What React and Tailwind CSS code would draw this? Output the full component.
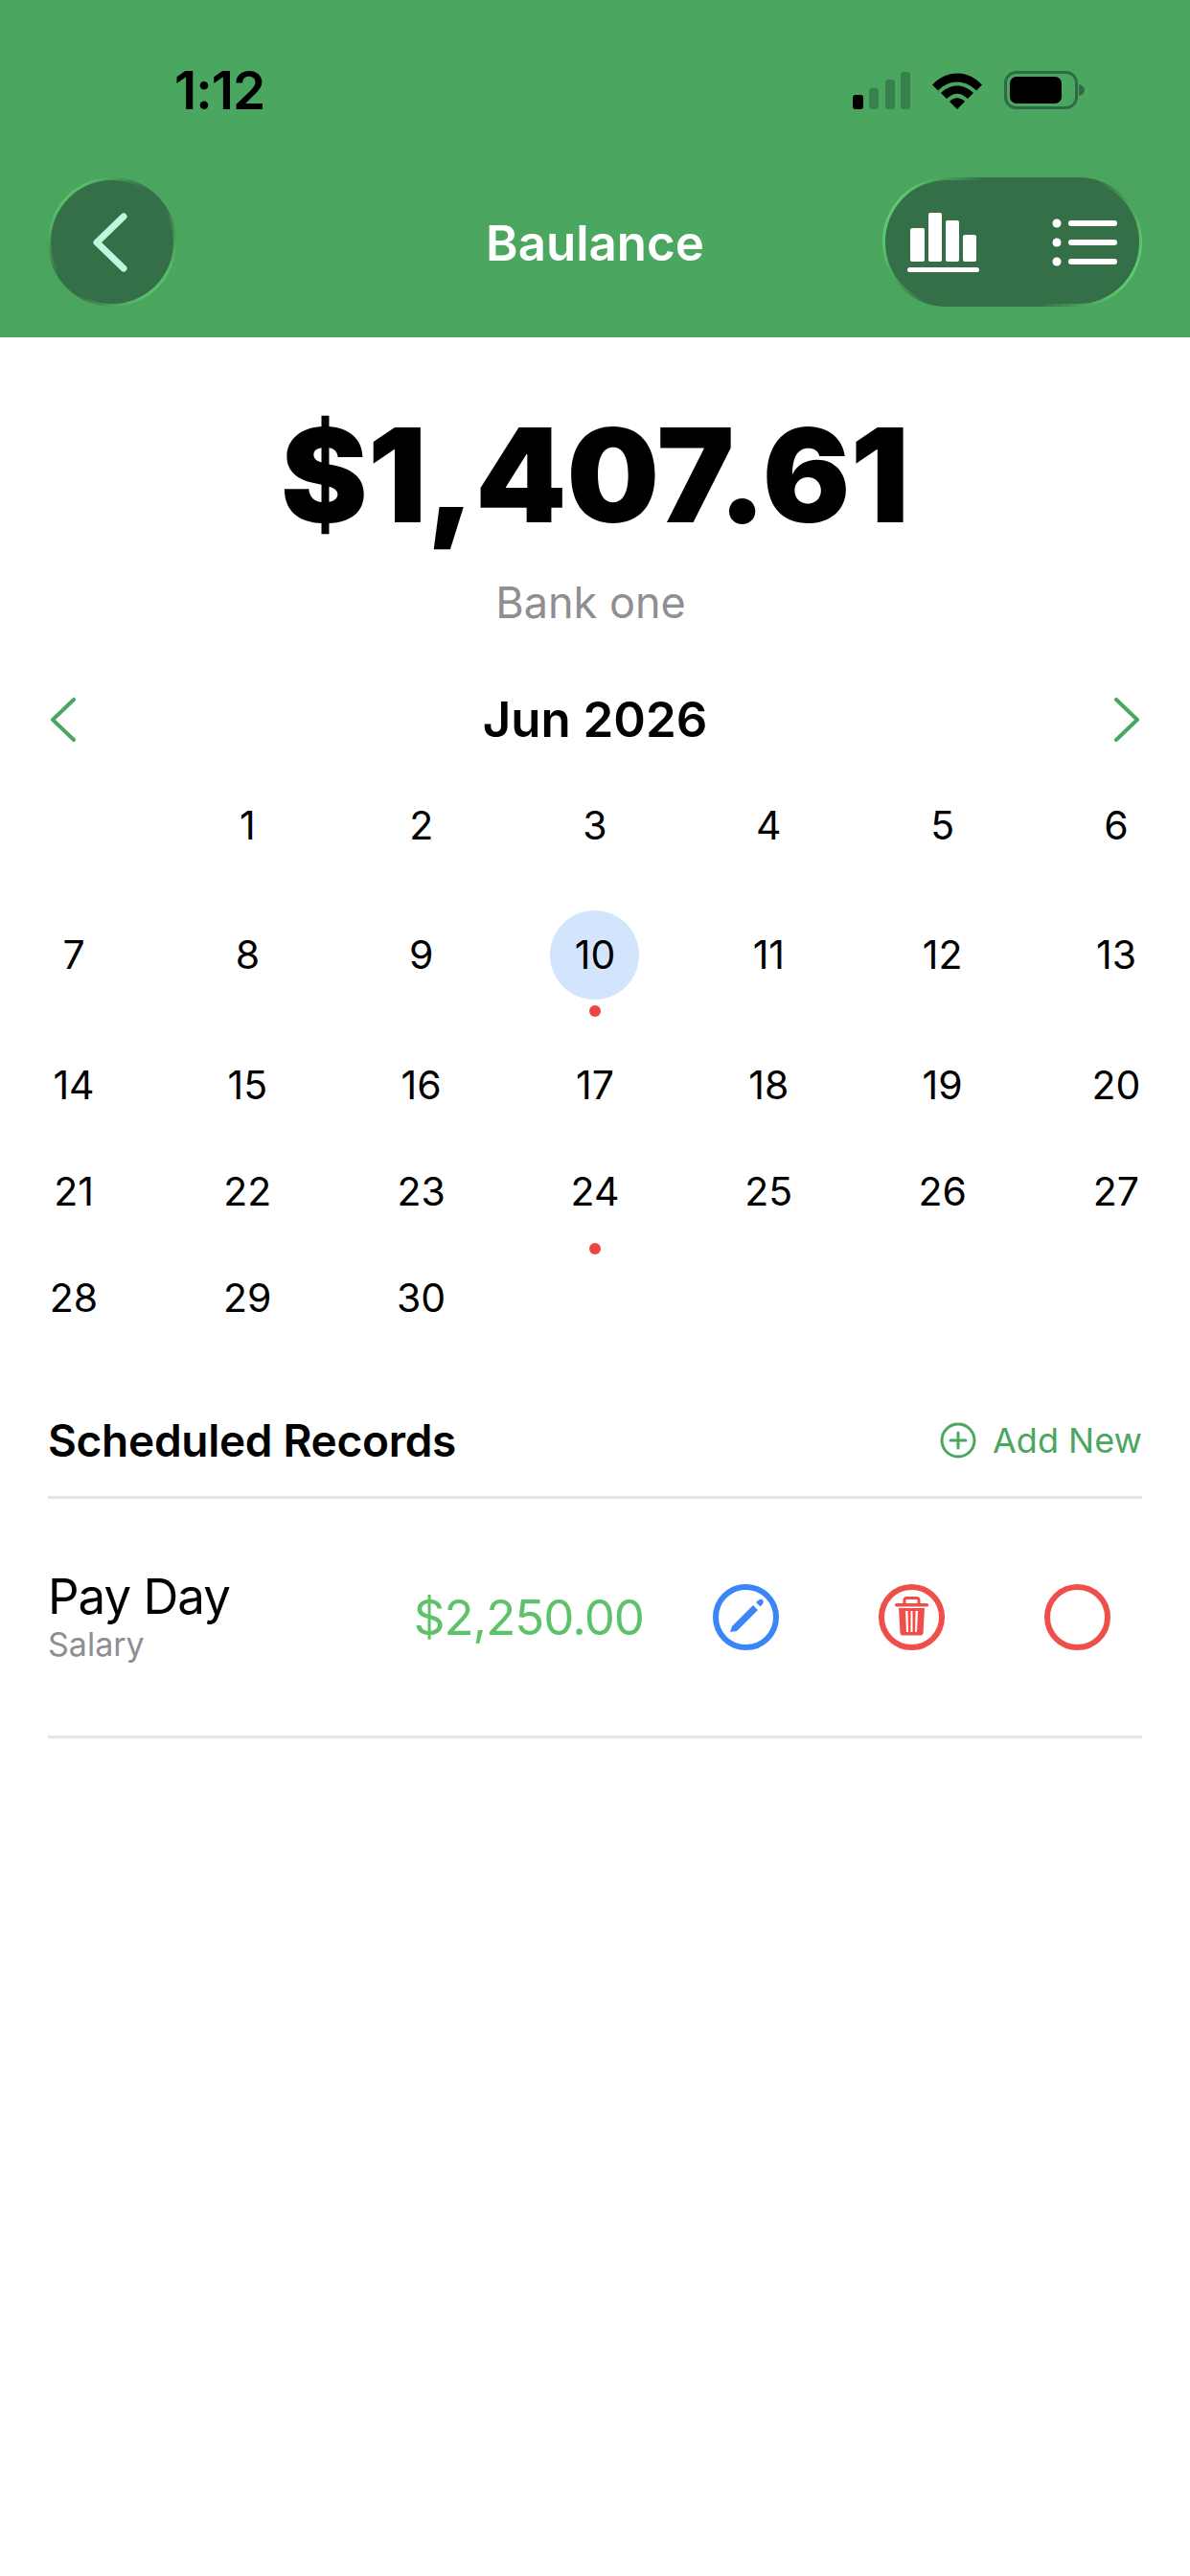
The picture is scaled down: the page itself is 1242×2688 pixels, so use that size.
import React from 'react';

const weeks = [
  { height: 'h-[111px]', days: [null, 1, 2, 3, 4, 5, 6] },
  { height: 'h-[160px]', days: [7, 8, 9, 10, 11, 12, 13] },
  { height: 'h-[111px]', days: [14, 15, 16, 17, 18, 19, 20] },
  { height: 'h-[111px]', days: [21, 22, 23, 24, 25, 26, 27] },
  { height: 'h-[111px]', days: [28, 29, 30, null, null, null, null] },
];

const marked = [10, 24];

const GlassButton = ({ className, children }) => (
  <div className={`rounded-[67px] p-[3px] shadow-[0_8px_50px_rgba(0,0,0,0.025)] ${className}`}>
    <div className="w-full h-full rounded-[64px] bg-[#356f47] flex items-center justify-between px-[23px]">
      {children}
    </div>
  </div>
);

const StatusBar = () => (
  <div className="flex items-center justify-between h-[40px] pl-[182px] pr-[109px]">
    <span className="text-[55px] leading-[40px] font-semibold text-black tracking-[-1px]">1:12</span>
    <svg width="243" height="40" viewBox="0 0 243 40">
      <rect x="0" y="25" width="11" height="15" rx="3" fill="#000" />
      <rect x="17" y="18" width="10" height="22" rx="3" fill="#38804e" />
      <rect x="34" y="9" width="10" height="31" rx="3" fill="#38804e" />
      <rect x="50" y="1" width="10" height="39" rx="3" fill="#38804e" />
      <path d="M83 14 C98 -2 120 -2 135 14 L129 20 C117 8 101 8 89 20 Z" fill="#000" transform="translate(0 0.5)" />
      <path d="M92 23 C102 13 116 13 126 23 L120 29 C112 22 106 22 98 29 Z" fill="#000" />
      <path d="M101 32 C106 27 112 27 117 32 L109 40 Z" fill="#000" />
      <rect x="159.5" y="1.5" width="74" height="37" rx="11" fill="none" stroke="#2f6b42" strokeWidth="3" />
      <rect x="164" y="6" width="54" height="28" rx="7" fill="#000" />
      <path d="M236 14 C240 15 242 17 242 20 C242 23 240 25 236 26 Z" fill="#2f6b42" />
    </svg>
  </div>
);

const BarsIcon = () => (
  <svg width="75" height="62" viewBox="0 0 75 62" fill="#fff">
    <rect x="3" y="16" width="15" height="35" rx="2" />
    <rect x="22" y="0" width="14" height="51" rx="2" />
    <rect x="40" y="8" width="14" height="43" rx="2" />
    <rect x="58" y="23" width="14" height="28" rx="2" />
    <rect x="0" y="57" width="75" height="5" rx="2.5" />
  </svg>
);

const ListIcon = () => (
  <svg width="68" height="50" viewBox="0 0 68 50" fill="#fff">
    <circle cx="5" cy="5" r="4.5" />
    <circle cx="5" cy="25" r="4.5" />
    <circle cx="5" cy="45" r="4.5" />
    <rect x="17" y="2" width="51" height="6" rx="3" />
    <rect x="17" y="22" width="51" height="6" rx="3" />
    <rect x="17" y="42" width="51" height="6" rx="3" />
  </svg>
);

const Chevron = ({ d }) => (
  <svg width="27" height="46" viewBox="0 0 27 46" fill="none" stroke="#4ba75f" strokeWidth="4" strokeLinecap="round" strokeLinejoin="round">
    <path d={d} />
  </svg>
);

const DayCell = ({ day }) => (
  <div className="relative w-[92px] flex items-center justify-center h-full">
    {day === 10 && <div className="absolute w-[93px] h-[93px] rounded-full bg-[#d2e5fc]" />}
    {day && <span className="relative text-[41px] leading-[50px] text-black">{day}</span>}
    {marked.includes(day) && (
      <div className={`absolute left-[40px] w-[12px] h-[12px] rounded-full bg-[#ef4444] ${day === 10 ? 'top-[133px]' : 'top-[110px]'}`} />
    )}
  </div>
);

const PencilButton = () => (
  <svg width="69" height="69" viewBox="0 0 69 69">
    <circle cx="34.5" cy="34.5" r="31.5" fill="none" stroke="#3b86f7" strokeWidth="6" />
    <path d="M18 50 L20 44 L42 22 L47 27 L25 49 Z" fill="#3b86f7" />
    <path d="M45 19 L48 16.5 C49.5 15.5 51 15.5 52 16.5 C53 17.5 53 19 52 20.5 L49.5 23.5 Z" fill="#3b86f7" />
  </svg>
);

const TrashButton = () => (
  <svg width="69" height="69" viewBox="0 0 69 69">
    <circle cx="34.5" cy="34.5" r="31.5" fill="none" stroke="#ef4f4a" strokeWidth="6" />
    <rect x="17" y="20" width="35" height="3.5" rx="1.5" fill="#ef4f4a" />
    <path d="M27 21 V17 C27 15.5 28 14.5 29.5 14.5 H39.5 C41 14.5 42 15.5 42 17 V21" fill="none" stroke="#ef4f4a" strokeWidth="3" />
    <path fillRule="evenodd" d="M21 25 H48 L46.5 51 C46.4 52.5 45.5 53.5 44 53.5 H25 C23.5 53.5 22.6 52.5 22.5 51 Z M28 28 L29 50 H31 L30.5 28 Z M33.5 28 V50 H35.5 V28 Z M38.5 28 L38 50 H40 L41 28 Z" fill="#ef4f4a" />
  </svg>
);

const CircleButton = () => (
  <svg width="69" height="69" viewBox="0 0 69 69">
    <circle cx="34.5" cy="34.5" r="31.5" fill="none" stroke="#ef4f4a" strokeWidth="6" />
  </svg>
);

export default function App() {
  return (
    <div className="min-h-[2688px] bg-white font-['Inter',sans-serif]">
      {/* header */}
      <div className="h-[352px] bg-[#4ba75f] pt-[74px]">
        <StatusBar />
        <div className="grid grid-cols-[1fr_auto_1fr] items-center mt-[71px] pl-[50px] pr-[50px]">
          <GlassButton className="w-[134px] h-[135px] bg-[linear-gradient(135deg,#5ccb6e_12%,#356f47_42%,#356f47_58%,#5ccb6e_88%)]">
            <svg className="ml-[20px]" width="40" height="62" viewBox="0 0 40 62" fill="none" stroke="#bdf7de" strokeWidth="7" strokeLinecap="round" strokeLinejoin="round">
              <path d="M33 4 L5 31 L33 58" />
            </svg>
          </GlassButton>
          <h1 className="pt-[2px] text-[51px] leading-[60px] font-semibold text-white">Baulance</h1>
          <GlassButton className="w-[271px] h-[135px] justify-self-end bg-[linear-gradient(115deg,#5ccb6e_8%,#356f47_32%,#356f47_68%,#5ccb6e_92%)]">
            <BarsIcon />
            <ListIcon />
          </GlassButton>
        </div>
      </div>

      {/* balance */}
      <div className="pt-[72px] text-center">
        <div className="text-[136px] leading-[144px] font-black text-black tracking-[0px]">$1,407.61</div>
        <div className="mt-[33px] pr-[9px] text-[45px] leading-[56px] text-[#8e8e93]">Bank one</div>
      </div>

      {/* calendar */}
      <div className="mt-[71px] flex items-center justify-between h-[46px] pl-[52px] pr-[52px]">
        <Chevron d="M25 2 L3 23 L25 44" />
        <span className="text-[51px] leading-[46px] font-semibold text-black">Jun 2026</span>
        <Chevron d="M2 2 L24 23 L2 44" />
      </div>
      <div className="mt-[31px] px-[31px]">
        {weeks.map((week, i) => (
          <div key={i} className={`flex justify-between ${week.height}`}>
            {week.days.map((day, j) => (
              <DayCell key={j} day={day} />
            ))}
          </div>
        ))}
      </div>

      {/* scheduled records */}
      <div className="mx-[50px] mt-[64px]">
        <div className="flex items-center justify-between h-[60px]">
          <h2 className="text-[46px] leading-[60px] font-semibold text-black tracking-[-0.3px]">Scheduled Records</h2>
          <div className="flex items-center gap-[17px] text-[#4ba75f]">
            <svg width="38" height="38" viewBox="0 0 38 38" fill="none" stroke="#4ba75f" strokeWidth="3" strokeLinecap="round">
              <circle cx="19" cy="19" r="17" />
              <path d="M19 11 V27 M11 19 H27" />
            </svg>
            <span className="text-[36px] leading-[44px]">Add New</span>
          </div>
        </div>
        <div className="mt-[28px] h-[3px] bg-[#e5e5e5]" />
        <div className="flex items-center h-[247px]">
          <div className="flex flex-col">
            <span className="-mt-[2px] text-[51px] leading-[56px] text-black tracking-[-1px]">Pay Day</span>
            <span className="mt-[3px] text-[34px] leading-[38px] text-[#8e8e93]">Salary</span>
          </div>
          <div className="ml-auto flex items-center pr-[33px]">
            <span className="text-[51px] leading-[60px] text-[#5ec26a] mr-[72px] tracking-[-1px]">$2,250.00</span>
            <div className="flex items-center gap-[104px]">
              <PencilButton />
              <TrashButton />
              <CircleButton />
            </div>
          </div>
        </div>
        <div className="h-[3px] bg-[#e5e5e5]" />
      </div>
    </div>
  );
}
